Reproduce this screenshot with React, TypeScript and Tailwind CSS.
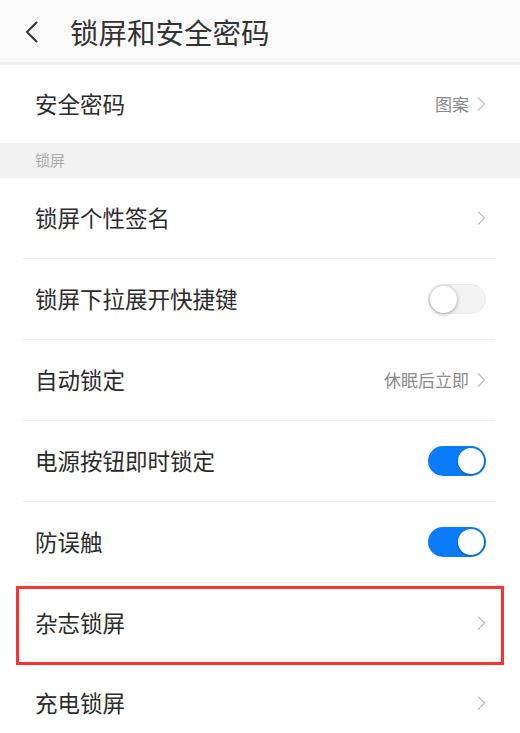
import { ReactNode } from 'react'

const Chevron = () => (
  <svg width="10" height="16" viewBox="0 0 10 16" className="shrink-0">
    <path d="M2 1.5 L8.5 8 L2 14.5" fill="none" stroke="#c4c4c4" strokeWidth="1.4" />
  </svg>
)

const Toggle = ({ on }: { on: boolean }) =>
  on ? (
    <div className="flex h-[30px] w-[58px] items-center justify-end rounded-full bg-[#0a7cfa] pr-[2px]">
      <div className="h-[26px] w-[26px] rounded-full bg-white shadow-[0_1px_3px_rgba(0,0,0,0.3)]" />
    </div>
  ) : (
    <div className="flex h-[30px] w-[58px] items-center rounded-full border border-[#ececec] bg-[#f3f3f3] pl-[1px]">
      <div className="h-[27px] w-[27px] rounded-full bg-white shadow-[0_1px_4px_rgba(0,0,0,0.35)]" />
    </div>
  )

const Value = ({ text }: { text: string }) => (
  <span className="flex items-center gap-[7px] text-[17px] text-[#8a8a8a]">
    {text}
    <Chevron />
  </span>
)

type Row = { label: string; right?: ReactNode; divider?: boolean; highlight?: boolean }

const rows: Row[] = [
  { label: '锁屏个性签名', right: <Chevron />, divider: true },
  { label: '锁屏下拉展开快捷键', right: <Toggle on={false} />, divider: true },
  { label: '自动锁定', right: <Value text="休眠后立即" />, divider: true },
  { label: '电源按钮即时锁定', right: <Toggle on />, divider: true },
  { label: '防误触', right: <Toggle on />, divider: true },
  { label: '杂志锁屏', right: <Chevron />, highlight: true },
  { label: '充电锁屏', right: <Chevron /> },
]

export default function App() {
  return (
    <div
      className="h-[733px] w-[520px] overflow-hidden bg-white text-[#2b2b2b]"
      style={{ fontFamily: '"Noto Sans CJK SC", "Noto Sans", sans-serif' }}
    >
      <div className="flex h-[65px] items-center border-b-[3px] border-[#efefef] bg-[#fafafa] pt-[2px]">
        <svg width="20" height="24" viewBox="0 0 20 24" className="ml-[22px]">
          <path d="M15 2 L5 12 L15 22" fill="none" stroke="#333" strokeWidth="2" />
        </svg>
        <span className="ml-[28px] text-[28.5px] text-[#333]">锁屏和安全密码</span>
      </div>

      <div className="flex h-[78px] items-center justify-between pl-[35px] pr-[34px]">
        <span className="text-[22.5px]">安全密码</span>
        <Value text="图案" />
      </div>

      <div className="flex h-[35px] items-center bg-[#f2f2f2] pl-[35px] text-[15px] text-[#ababab]">锁屏</div>

      {rows.map((r) => (
        <div key={r.label} className="relative">
          <div className="flex h-[80px] items-center justify-between pl-[35px] pr-[34px]">
            <span className="text-[22.5px]">{r.label}</span>
            {r.right}
          </div>
          {r.divider && <div className="ml-[23px] mr-[25px] h-px bg-[#ececec]" />}
          {r.highlight && (
            <div className="absolute left-[16px] right-[16px] top-[3px] h-[79px] border-[3px] border-[#ff3030]" />
          )}
        </div>
      ))}
    </div>
  )
}
